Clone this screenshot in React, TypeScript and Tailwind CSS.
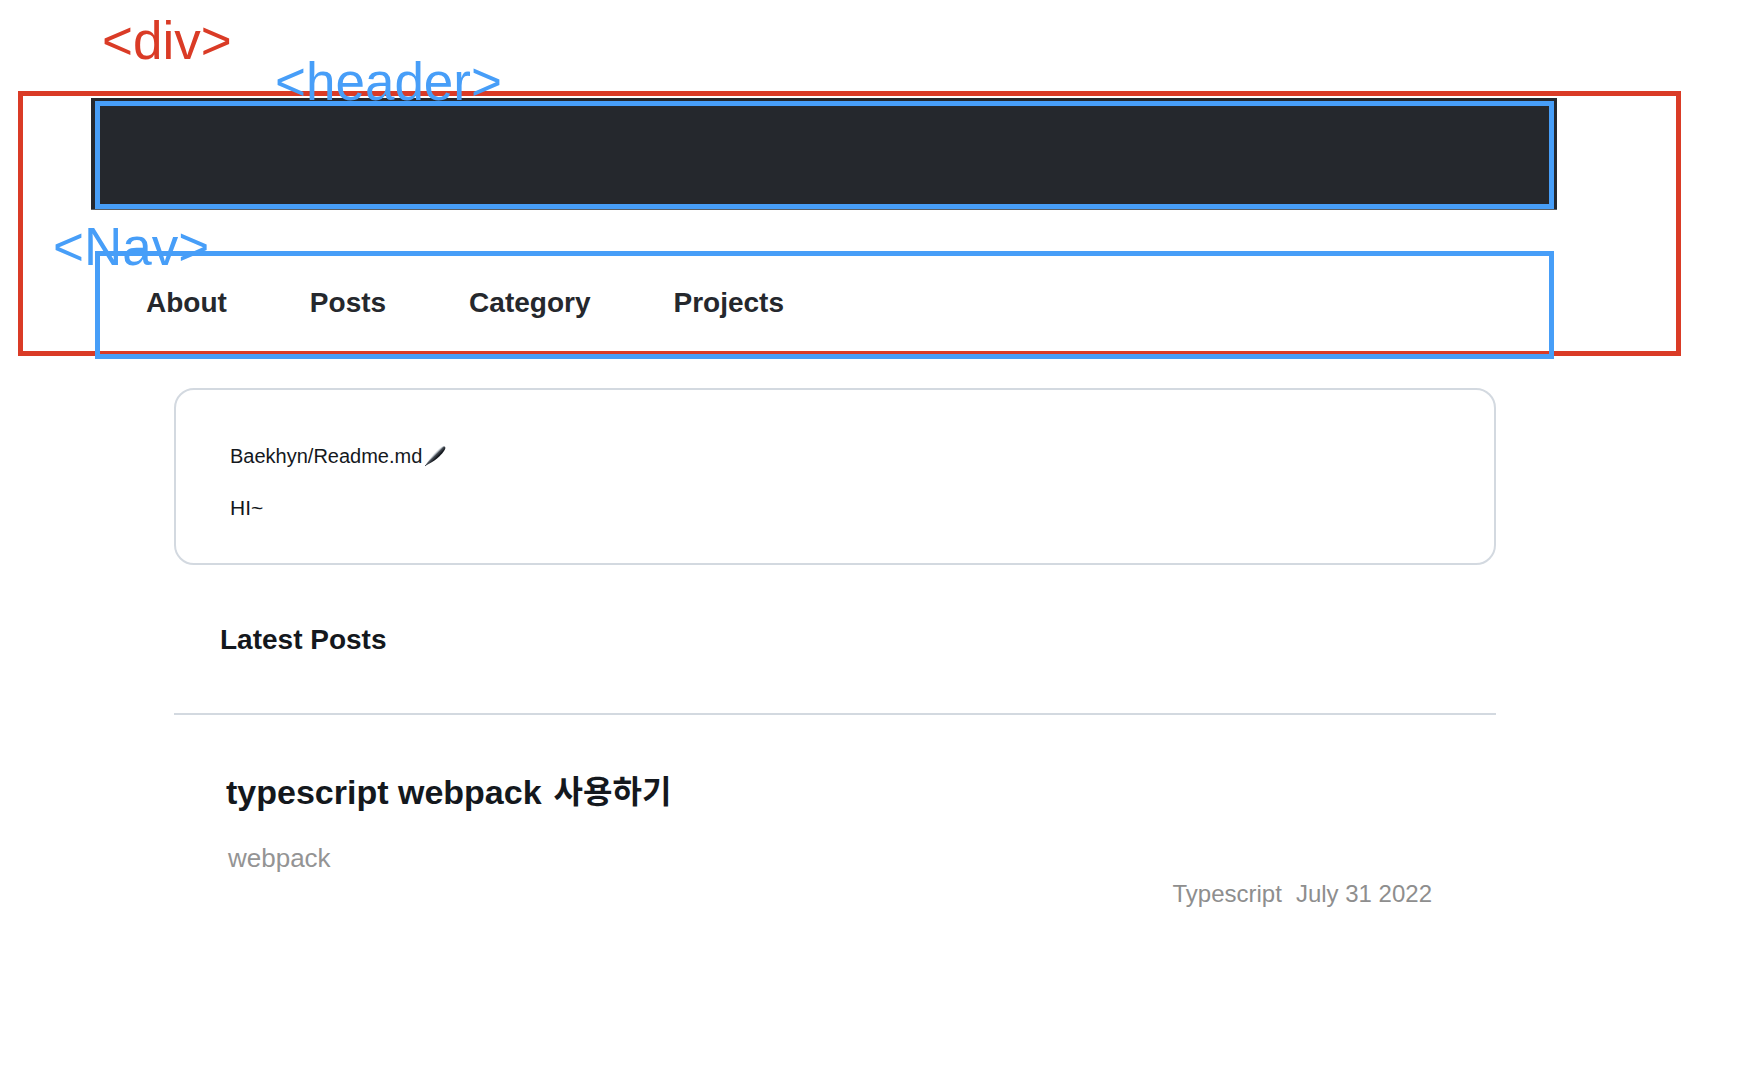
const navItems = ['About', 'Posts', 'Category', 'Projects'];

const posts = [
  {
    title: 'typescript webpack',
    titleKo: '사용하기',
    description: 'webpack',
    category: 'Typescript',
    date: 'July 31 2022'
  }
];

function PenIcon() {
  return (
    <svg width="22" height="22" viewBox="0 0 22 22" aria-hidden="true">
      <defs>
        <linearGradient id="pen-body" x1="9" y1="8" x2="13" y2="12" gradientUnits="userSpaceOnUse">
          <stop offset="0" stopColor="#7d848c" />
          <stop offset="0.4" stopColor="#c3c9cf" />
          <stop offset="0.6" stopColor="#4a5058" />
          <stop offset="1" stopColor="#15191f" />
        </linearGradient>
      </defs>
      <path
        d="M1 21 C2.5 18.4 4.8 15.2 7.4 12.2 C10.8 8.4 14.8 3.9 17.8 1.9 C19.5 0.8 21.8 1.2 21.3 3.4 C20.6 6 16.6 10.4 12.8 13.7 C9.4 16.5 5.4 18.8 1 21 Z"
        fill="url(#pen-body)"
      />
      <path d="M1 21 L6.5 15.8" stroke="#4a5057" strokeWidth="1" />
    </svg>
  );
}

function Header() {
  return (
    <header className="ml-[68px] mr-[119px] mt-[2px] h-28 border-b border-[#5b5f63] bg-[#25282d] pl-1 pr-[3px] pt-[3px]">
      <div className="h-[108px] border-5 border-[#479ef8]" />
    </header>
  );
}

function Nav() {
  return (
    <nav className="-mb-[3px] ml-[72px] mr-[122px] mt-[41px] h-[108px] border-5 border-[#479ef8] pl-[46px] pt-[27px]">
      <ul className="flex gap-[83px] text-[28px] font-bold leading-10 text-[#25282d]">
        {navItems.map((item) => (
          <li key={item}>
            <a href="#">{item}</a>
          </li>
        ))}
      </ul>
    </nav>
  );
}

export default function App() {
  return (
    <div className="relative min-h-screen bg-white pt-[91px] font-['Liberation_Sans','Noto_Sans_CJK_KR',sans-serif] text-[#14181d]">
      <div className="ml-[18px] mr-[62px] h-[265px] border-5 border-[#da3b26]">
        <Header />
        <Nav />
      </div>

      {/* Tag annotations drawn over the layout */}
      <span className="absolute left-[102px] top-[11px] text-[53px] leading-[60px] text-[#da3b26]">{'<div>'}</span>
      <span className="absolute left-[275px] top-[52px] text-[53px] leading-[60px] text-[#479ef8]">{'<header>'}</span>
      <span className="absolute left-[53px] top-[217px] text-[53px] leading-[60px] text-[#479ef8]">{'<Nav>'}</span>

      <main className="ml-[174px] mr-[247px] mt-8">
        <section className="h-[177px] rounded-[20px] border-2 border-[#d3d9e0] pl-[54px] pt-[50px]">
          <div className="flex items-center gap-[2px] text-[20px] leading-8">
            <p>Baekhyn/Readme.md</p>
            <PenIcon />
          </div>
          <p className="mt-5 text-[21px] leading-8">HI~</p>
        </section>

        <h2 className="h-[150px] border-b-2 border-[#d3d9e0] pl-[46px] pt-[55px] text-[28px] font-bold leading-10">
          Latest Posts
        </h2>

        {posts.map((post) => (
          <article key={post.title} className="pl-[52px] pr-16 pt-[55px]">
            <h3 className="flex gap-3 text-[34px] font-bold leading-[44px]">
              {post.title} <span className="text-[32px]">{post.titleKo}</span>
            </h3>
            <p className="mt-[26px] pl-[2px] text-[26px] leading-9 text-[#949494]">{post.description}</p>
            <div className="flex justify-end gap-[14px] text-[24px] leading-9 text-[#8e8e8e]">
              <span>{post.category}</span>
              <time dateTime="2022-07-31">{post.date}</time>
            </div>
          </article>
        ))}
      </main>
    </div>
  );
}
